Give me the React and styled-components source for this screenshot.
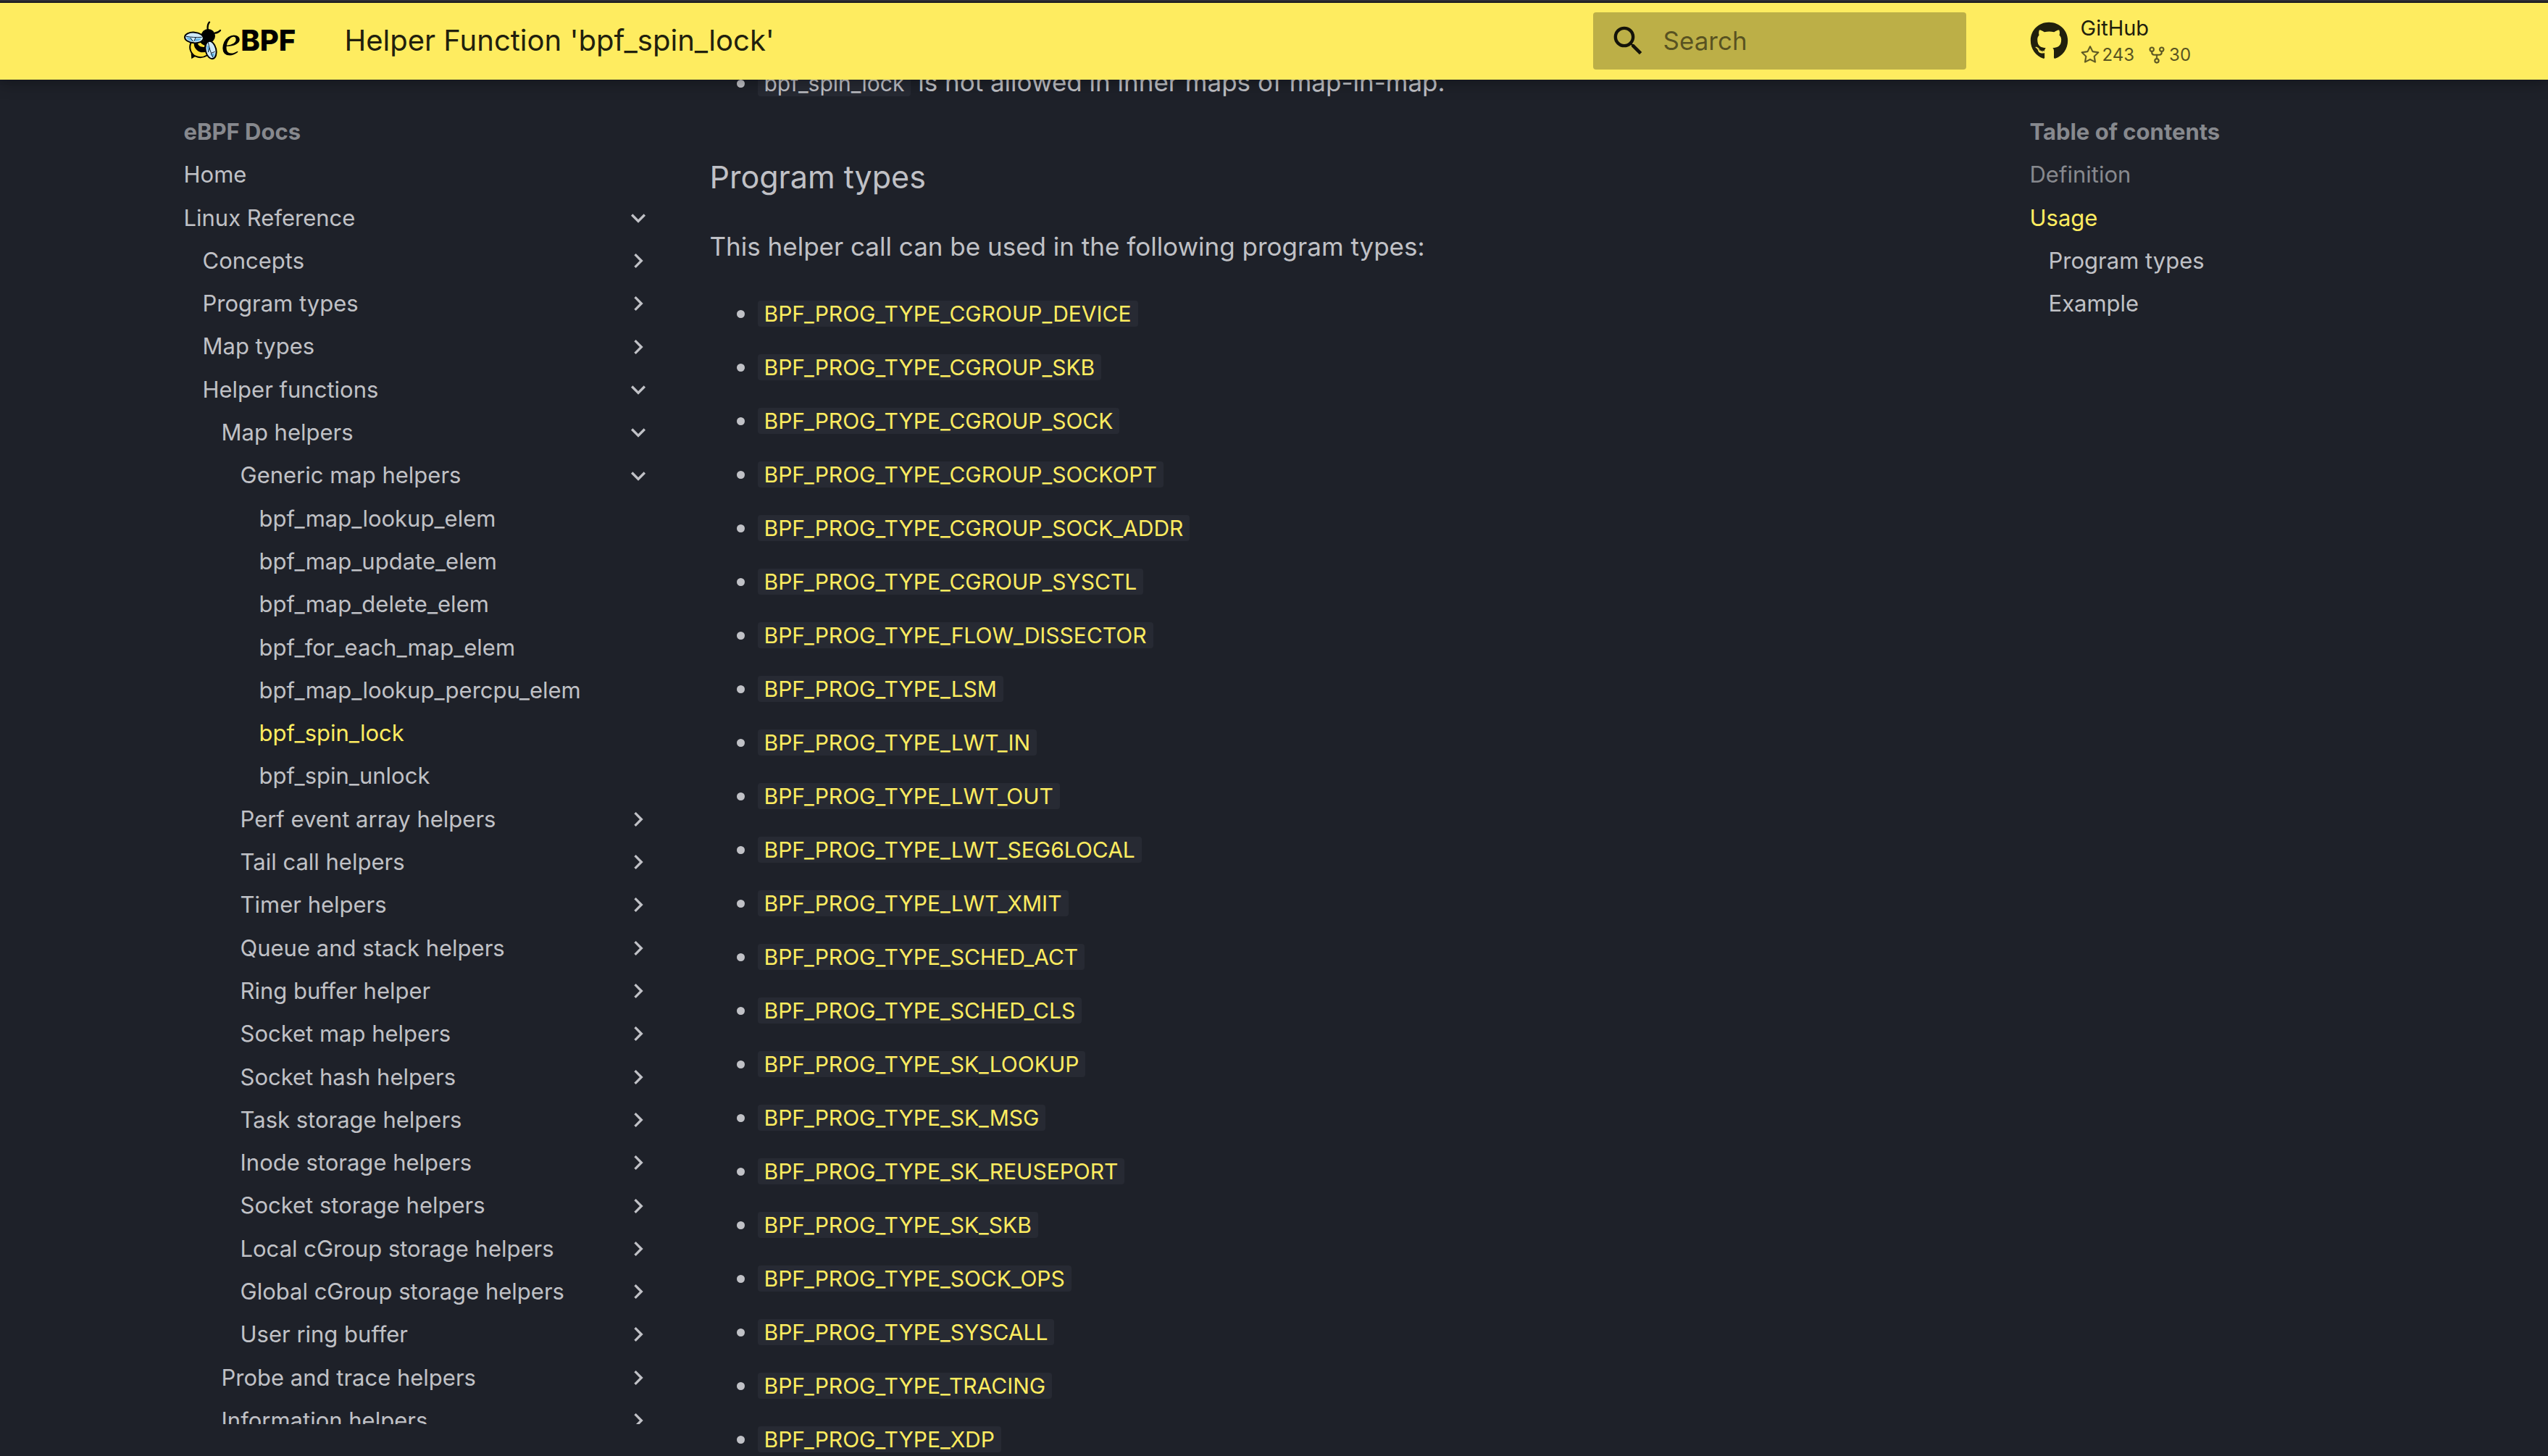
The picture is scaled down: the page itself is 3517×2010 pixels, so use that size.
import React, { useState } from "react";
import styled, { createGlobalStyle } from "styled-components";
import { FaGithub } from "react-icons/fa";
import { GoStar, GoRepoForked } from "react-icons/go";

const color = {
  page: "#1e2129",
  text: "#c0c1c6",
  muted: "#87898e",
  accent: "#feec60",
  code: "#272a33",
  ink: "#21200d",
};

const GlobalStyle = createGlobalStyle`
  *, *::before, *::after { box-sizing: border-box; }
  body {
    margin: 0;
    background: ${color.page};
    color: ${color.text};
    font-family: Inter, Roboto, sans-serif;
    -webkit-font-smoothing: antialiased;
  }
  a { color: inherit; text-decoration: none; }
`;

const Page = styled.div`
  display: flex;
  flex-direction: column;
  height: 100vh;
  overflow: hidden;
  border-top: 2px solid #302f36;
`;

const Header = styled.header`
  position: relative;
  z-index: 1;
  flex: none;
  border-top: 2px solid #1b1b1f;
  background: ${color.accent};
  color: ${color.ink};
  box-shadow: 0 0 9px rgba(0, 0, 0, 0.1), 0 9px 18px rgba(0, 0, 0, 0.2);
`;

const HeaderBar = styled.div`
  display: flex;
  align-items: center;
  height: 106px;
  max-width: 3080px;
  margin: 0 auto;
  padding: 0 35px 2px;
`;

const Brand = styled.a`
  display: flex;
  align-items: center;
  flex: none;
  width: 222px;
  color: #000;
`;

const BeeSvg = styled.svg`
  width: 52px;
  height: 54px;
  flex: none;
`;

const BrandScript = styled.span`
  font: italic 60px/54px "Liberation Serif", serif;
`;

const BrandName = styled.span`
  font-size: 40px;
  font-weight: 800;
  line-height: 54px;
`;

const PageTitle = styled.div`
  flex: 1;
  font-size: 40px;
  line-height: 104px;
  white-space: nowrap;
`;

const SearchBox = styled.label`
  display: flex;
  align-items: center;
  gap: 22px;
  width: 515px;
  height: 79px;
  padding: 0 22px;
  border-radius: 4px;
  background: rgba(0, 0, 0, 0.26);
`;

const SearchIcon = styled.svg`
  width: 53px;
  height: 53px;
  flex: none;
  fill: #14130a;
`;

const SearchInput = styled.input`
  flex: 1;
  min-width: 0;
  padding: 0;
  border: 0;
  outline: 0;
  background: transparent;
  color: ${color.ink};
  font: 35px/42px Inter, sans-serif;
  &::placeholder { color: rgba(0, 0, 0, 0.54); opacity: 1; }
`;

const Source = styled.a`
  display: flex;
  align-items: center;
  gap: 17px;
  width: 462px;
  margin-left: 88px;
  font-size: 29px;
  line-height: 40px;
  & > svg { width: 53px; height: 53px; flex: none; }
`;

const Facts = styled.ul`
  display: flex;
  gap: 18px;
  margin: 0;
  padding: 0;
  list-style: none;
  font-size: 24px;
  line-height: 34px;
  opacity: 0.75;
`;

const Fact = styled.li`
  display: flex;
  align-items: center;
  gap: 4px;
  & > svg { width: 26px; height: 26px; stroke: currentColor; stroke-width: 0.4px; }
`;

const Main = styled.div`
  flex: 1;
  min-height: 0;
  display: flex;
  width: 100%;
  max-width: 3080px;
  margin: 0 auto;
  padding: 0 35px;
  overflow: hidden;
`;

const Sidebar = styled.nav`
  flex: none;
  width: ${(p) => p.$width}px;
  margin: 52px 0 44px;
  overflow: hidden;
  font-size: 31px;
  line-height: 1.3;
`;

const SidebarTitle = styled.div`
  color: ${color.muted};
  font-weight: 700;
`;

const NavList = styled.ul`
  margin: 0;
  padding: 0 0 0 ${(p) => (p.$nested ? 26 : 0)}px;
  list-style: none;
`;

const NavItem = styled.li`
  margin-top: 19px;
`;

const navColor = { active: color.accent, passed: color.muted };

const NavLink = styled.a`
  display: block;
  color: ${(p) => navColor[p.$state] || color.text};
`;

const NavToggle = styled.button`
  display: flex;
  align-items: center;
  justify-content: space-between;
  width: 100%;
  margin-top: 19px;
  padding: 0;
  border: 0;
  background: none;
  color: inherit;
  font: inherit;
  text-align: left;
  cursor: pointer;
`;

const Chevron = styled.svg`
  width: 40px;
  height: 40px;
  fill: currentColor;
  transform: rotate(${(p) => (p.$open ? 90 : 0)}deg);
`;

const NavGroup = styled.li`
  margin: 0;
`;

const Article = styled.main`
  flex: 1;
  min-width: 0;
  margin: -25px 53px 0 79px;
  font-size: 35px;
  line-height: 56px;
`;

const Heading = styled.h3`
  margin: 70px 0 35px;
  font-size: 43px;
  font-weight: 400;
  line-height: 66px;
`;

const Paragraph = styled.p`
  margin: 0 0 35px;
`;

const Bullets = styled.ul`
  margin: 0;
  padding: 0 0 0 66px;
`;

const Bullet = styled.li`
  margin: 0 0 18px;
  &:last-child { margin-bottom: 0; }
`;

const Code = styled.code`
  padding: 0 9px;
  border-radius: 4px;
  background: ${color.code};
  font-family: inherit;
  font-size: 30px;
  line-height: 30px;
`;

const CodeLink = styled.a`
  color: ${color.accent};
`;

const nav = [
  { label: "Home" },
  {
    label: "Linux Reference",
    open: true,
    items: [
      { label: "Concepts", items: [] },
      { label: "Program types", items: [] },
      { label: "Map types", items: [] },
      {
        label: "Helper functions",
        open: true,
        items: [
          {
            label: "Map helpers",
            open: true,
            items: [
              {
                label: "Generic map helpers",
                open: true,
                items: [
                  { label: "bpf_map_lookup_elem" },
                  { label: "bpf_map_update_elem" },
                  { label: "bpf_map_delete_elem" },
                  { label: "bpf_for_each_map_elem" },
                  { label: "bpf_map_lookup_percpu_elem" },
                  { label: "bpf_spin_lock", state: "active" },
                  { label: "bpf_spin_unlock" },
                ],
              },
              { label: "Perf event array helpers", items: [] },
              { label: "Tail call helpers", items: [] },
              { label: "Timer helpers", items: [] },
              { label: "Queue and stack helpers", items: [] },
              { label: "Ring buffer helper", items: [] },
              { label: "Socket map helpers", items: [] },
              { label: "Socket hash helpers", items: [] },
              { label: "Task storage helpers", items: [] },
              { label: "Inode storage helpers", items: [] },
              { label: "Socket storage helpers", items: [] },
              { label: "Local cGroup storage helpers", items: [] },
              { label: "Global cGroup storage helpers", items: [] },
              { label: "User ring buffer", items: [] },
            ],
          },
          { label: "Probe and trace helpers", items: [] },
          { label: "Information helpers", items: [] },
        ],
      },
    ],
  },
];

const programTypes = [
  "CGROUP_DEVICE",
  "CGROUP_SKB",
  "CGROUP_SOCK",
  "CGROUP_SOCKOPT",
  "CGROUP_SOCK_ADDR",
  "CGROUP_SYSCTL",
  "FLOW_DISSECTOR",
  "LSM",
  "LWT_IN",
  "LWT_OUT",
  "LWT_SEG6LOCAL",
  "LWT_XMIT",
  "SCHED_ACT",
  "SCHED_CLS",
  "SK_LOOKUP",
  "SK_MSG",
  "SK_REUSEPORT",
  "SK_SKB",
  "SOCK_OPS",
  "SYSCALL",
  "TRACING",
  "XDP",
].map((name) => `BPF_PROG_TYPE_${name}`);

function Bee() {
  return (
    <BeeSvg viewBox="42 89 156 162" aria-hidden="true">
      <g fill="none" stroke="#000" strokeWidth="7" strokeLinecap="round">
        <path d="M140 124C139 110 142 99 147 94" />
        <path d="M170 139C181 138 188 133 192 128" />
      </g>
      <path d="M73 246L71 222L92 234Z" fill="#000" />
      <path
        d="M70 180C61 203 71 226 90 235C105 242 124 240 140 230L132 180L100 170Z"
        fill="#fde13a"
        stroke="#000"
        strokeWidth="6"
      />
      <path d="M84 178C80 198 95 213 113 219L134 218L132 176L110 168Z" fill="#000" />
      <path d="M98 180C101 192 112 198 126 197L128 190C118 188 112 182 110 177Z" fill="#fde13a" />
      <circle cx="142" cy="151" r="29" fill="#000" />
      <g stroke="#000" strokeWidth="6">
        <ellipse cx="84" cy="158" rx="39" ry="22" transform="rotate(4 84 158)" fill="#cfe9f8" />
        <ellipse cx="153" cy="209" rx="22" ry="37" transform="rotate(-13 153 209)" fill="#cfe9f8" />
      </g>
      <g fill="#6cb9e8">
        <path d="M52 156L68 158L80 172C68 174 54 168 52 156Z" />
        <path d="M88 162L113 160C110 170 99 174 86 173Z" />
        <path d="M137 188L147 196L144 220C137 208 135 198 137 188Z" />
        <path d="M150 226L168 222C170 232 166 239 160 239Z" />
      </g>
      <g fill="none" stroke="#123" strokeWidth="3">
        <path d="M51 153C72 156 92 158 116 156M68 158L80 174M90 158L84 172" />
        <path d="M142 178C146 196 152 220 162 240M148 200L142 218M155 222L170 216" />
      </g>
    </BeeSvg>
  );
}

function Group({ item }) {
  const [open, setOpen] = useState(Boolean(item.open));
  return (
    <NavGroup>
      <NavToggle type="button" aria-expanded={open} onClick={() => setOpen(!open)}>
        {item.label}
        <Chevron viewBox="0 0 24 24" $open={open} aria-hidden="true">
          <path d="M8.59 16.58 13.17 12 8.59 7.41 10 6l6 6-6 6z" />
        </Chevron>
      </NavToggle>
      {open && item.items.length > 0 && <Tree items={item.items} nested />}
    </NavGroup>
  );
}

function Tree({ items, nested }) {
  return (
    <NavList $nested={nested}>
      {items.map((item) =>
        item.items ? (
          <Group key={item.label} item={item} />
        ) : (
          <NavItem key={item.label}>
            <NavLink href="#" $state={item.state}>
              {item.label}
            </NavLink>
          </NavItem>
        )
      )}
    </NavList>
  );
}

export default function App() {
  return (
    <Page>
      <GlobalStyle />
      <Header>
        <HeaderBar>
          <Brand href="#" aria-label="eBPF Docs">
            <Bee />
            <BrandScript>e</BrandScript>
            <BrandName>BPF</BrandName>
          </Brand>
          <PageTitle>Helper Function 'bpf_spin_lock'</PageTitle>
          <SearchBox>
            <SearchIcon viewBox="0 0 24 24" aria-hidden="true">
              <path d="M9.5 3A6.5 6.5 0 0 1 16 9.5c0 1.61-.59 3.09-1.56 4.23l.27.27h.79l5 5-1.5 1.5-5-5v-.79l-.27-.27A6.52 6.52 0 0 1 9.5 16 6.5 6.5 0 0 1 3 9.5 6.5 6.5 0 0 1 9.5 3m0 2C7 5 5 7 5 9.5S7 14 9.5 14 14 12 14 9.5 12 5 9.5 5" />
            </SearchIcon>
            <SearchInput type="text" placeholder="Search" aria-label="Search" />
          </SearchBox>
          <Source href="#">
            <FaGithub aria-hidden="true" />
            <div>
              GitHub
              <Facts>
                <Fact>
                  <GoStar aria-hidden="true" />
                  243
                </Fact>
                <Fact>
                  <GoRepoForked aria-hidden="true" />
                  30
                </Fact>
              </Facts>
            </div>
          </Source>
        </HeaderBar>
      </Header>
      <Main>
        <Sidebar $width={647} aria-label="Navigation">
          <SidebarTitle>eBPF Docs</SidebarTitle>
          <Tree items={nav} />
        </Sidebar>
        <Article>
          <Bullets>
            <Bullet>
              <Code>bpf_spin_lock</Code> is not allowed in inner maps of map-in-map.
            </Bullet>
          </Bullets>
          <Heading>Program types</Heading>
          <Paragraph>This helper call can be used in the following program types:</Paragraph>
          <Bullets>
            {programTypes.map((name) => (
              <Bullet key={name}>
                <CodeLink href="#">
                  <Code>{name}</Code>
                </CodeLink>
              </Bullet>
            ))}
          </Bullets>
        </Article>
        <Sidebar $width={462} aria-label="Table of contents">
          <SidebarTitle>Table of contents</SidebarTitle>
          <NavList>
            <NavItem>
              <NavLink href="#" $state="passed">Definition</NavLink>
            </NavItem>
            <NavItem>
              <NavLink href="#" $state="active">Usage</NavLink>
              <NavList $nested>
                <NavItem>
                  <NavLink href="#">Program types</NavLink>
                </NavItem>
                <NavItem>
                  <NavLink href="#">Example</NavLink>
                </NavItem>
              </NavList>
            </NavItem>
          </NavList>
        </Sidebar>
      </Main>
    </Page>
  );
}
